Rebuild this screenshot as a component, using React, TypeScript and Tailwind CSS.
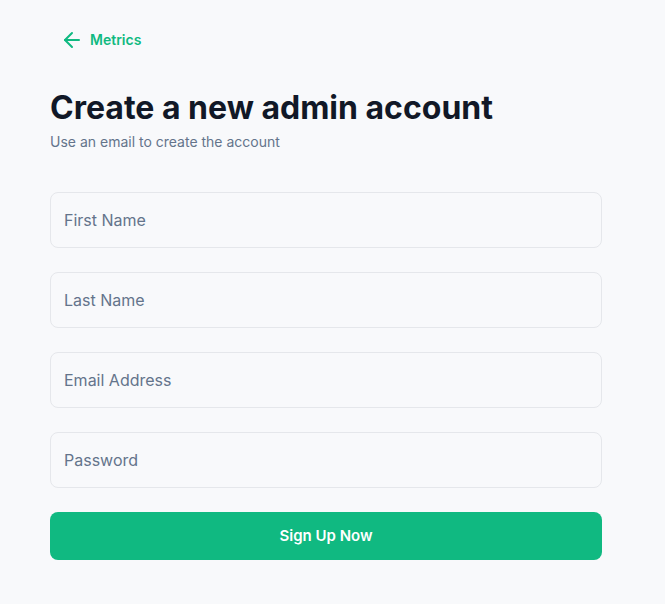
import { ArrowLeft } from 'lucide-react';

const fields = [
  { name: 'firstName', placeholder: 'First Name', type: 'text' },
  { name: 'lastName', placeholder: 'Last Name', type: 'text' },
  { name: 'email', placeholder: 'Email Address', type: 'email' },
  { name: 'password', placeholder: 'Password', type: 'password' },
];

export default function App() {
  return (
    <div className="min-h-screen bg-[#f8f9fb] font-['Inter',sans-serif] text-[#111827]">
      <div className="w-[552px] pl-[50px] pt-[30px] box-content">
        <a className="ml-[10px] flex h-5 w-fit items-center gap-1.5 text-sm font-semibold text-[#10b981]" href="#">
          <ArrowLeft className="h-6 w-6" strokeWidth={2} />
          Metrics
        </a>

        <h1 className="mt-[38px] text-[32px] font-bold leading-10">Create a new admin account</h1>
        <p className="mt-[4px] text-sm leading-5 text-[#64748b]">Use an email to create the account</p>

        <form className="mt-[40px] flex flex-col gap-6" onSubmit={(e) => e.preventDefault()}>
          {fields.map(({ name, placeholder, type }) => (
            <input
              className="h-14 w-full rounded-lg border border-[#e5e7eb] bg-[#f8f9fb] px-[13px] text-base text-[#111827] outline-none placeholder:text-[#64748b]"
              key={name}
              name={name}
              placeholder={placeholder}
              type={type}
            />
          ))}
          <button className="h-12 w-full rounded-lg bg-[#10b981] text-[15px] font-semibold text-white" type="submit">
            Sign Up Now
          </button>
        </form>
      </div>
    </div>
  );
}
